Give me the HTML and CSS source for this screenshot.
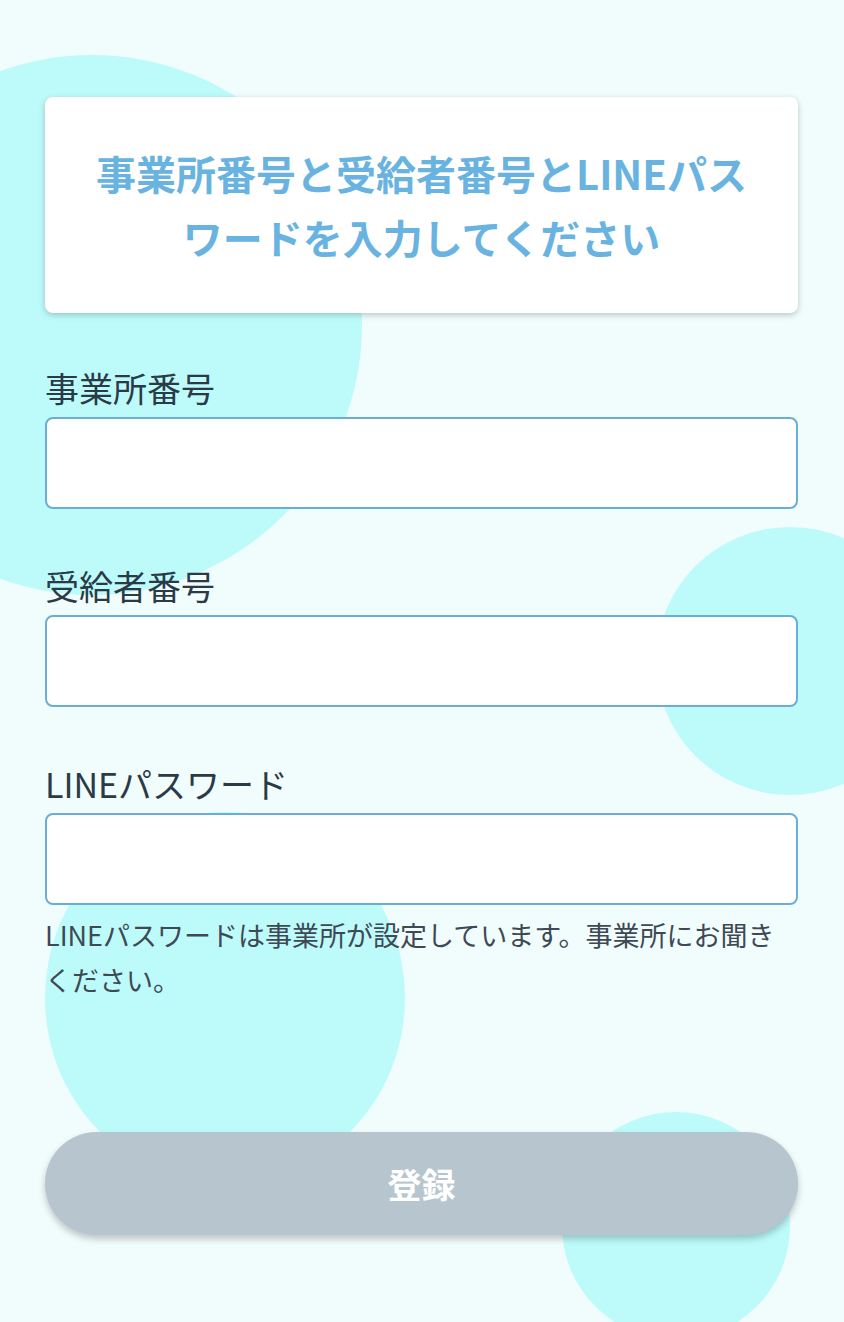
FILE: index.html
```html
<!DOCTYPE html>
<html lang="ja">
<head>
<meta charset="utf-8">
<title>登録</title>
<link rel="stylesheet" href="styles.css">
</head>
<body>
<div class="bg" aria-hidden="true">
  <div class="blob blob-1"></div>
  <div class="blob blob-2"></div>
  <div class="blob blob-3"></div>
  <div class="blob blob-4"></div>
</div>
<main class="page">
  <section class="card">
    <h1 class="card-title">事業所番号と受給者番号とLINEパスワードを入力してください</h1>
  </section>
  <form class="form">
    <div class="field">
      <label class="field-label" for="office">事業所番号</label>
      <input class="field-input" id="office" type="text">
    </div>
    <div class="field">
      <label class="field-label" for="recipient">受給者番号</label>
      <input class="field-input" id="recipient" type="text">
    </div>
    <div class="field">
      <label class="field-label" for="password">LINEパスワード</label>
      <input class="field-input" id="password" type="password">
      <p class="field-help">LINEパスワードは事業所が設定しています。事業所にお聞きください。</p>
    </div>
    <button class="submit" type="button">登録</button>
  </form>
</main>
</body>
</html>
```

FILE: styles.css
```css
html, body {
  margin: 0;
  padding: 0;
  height: 1322px;
  overflow: hidden;
}

body {
  background: #f1fcfd;
  font-family: "Noto Sans CJK JP", "Noto Sans", sans-serif;
  position: relative;
}

.bg {
  position: absolute;
  inset: 0;
  overflow: hidden;
  z-index: 0;
}

.blob {
  position: absolute;
  background: #bdfbfb;
  border-radius: 50%;
}

.blob-1 {
  left: -178px;
  top: 55px;
  width: 540px;
  height: 540px;
}

.blob-2 {
  left: 656px;
  top: 527px;
  width: 268px;
  height: 268px;
}

.blob-3 {
  left: 45px;
  top: 812px;
  width: 360px;
  height: 372px;
}

.blob-4 {
  left: 562px;
  top: 1112px;
  width: 228px;
  height: 228px;
}

.page {
  position: relative;
  z-index: 1;
  padding: 97px 46px 0 45px;
}

.card {
  background: #ffffff;
  border-radius: 8px;
  box-shadow: 0 2px 6px rgba(0, 0, 0, 0.22);
  padding: 44px 40px;
}

.card-title {
  margin: 0;
  text-align: center;
  color: #69b3e0;
  font-size: 40px;
  font-weight: 700;
  line-height: 64px;
}

.form {
  display: flex;
  flex-direction: column;
  gap: 52px;
  margin-top: 50px;
}

.field {
  display: flex;
  flex-direction: column;
}

.field-label {
  font-size: 34px;
  line-height: 50px;
  color: #2a3a46;
  margin-bottom: 4px;
}

.field-input {
  box-sizing: border-box;
  height: 92px;
  width: 100%;
  border: 2px solid #6aaed8;
  border-radius: 8px;
  background: #ffffff;
  font-size: 30px;
  padding: 0 16px;
  outline: none;
}

.field-help {
  margin: 7px 0 0;
  font-size: 27px;
  line-height: 45px;
  color: #3e4953;
}

.submit {
  margin-top: 78px;
  height: 103px;
  border: none;
  border-radius: 52px;
  background: #b7c6ce;
  color: #ffffff;
  font-family: "Noto Sans CJK JP", "Noto Sans", sans-serif;
  font-size: 34px;
  font-weight: 700;
  box-shadow: 0 4px 7px rgba(0, 0, 0, 0.22);
}
```
